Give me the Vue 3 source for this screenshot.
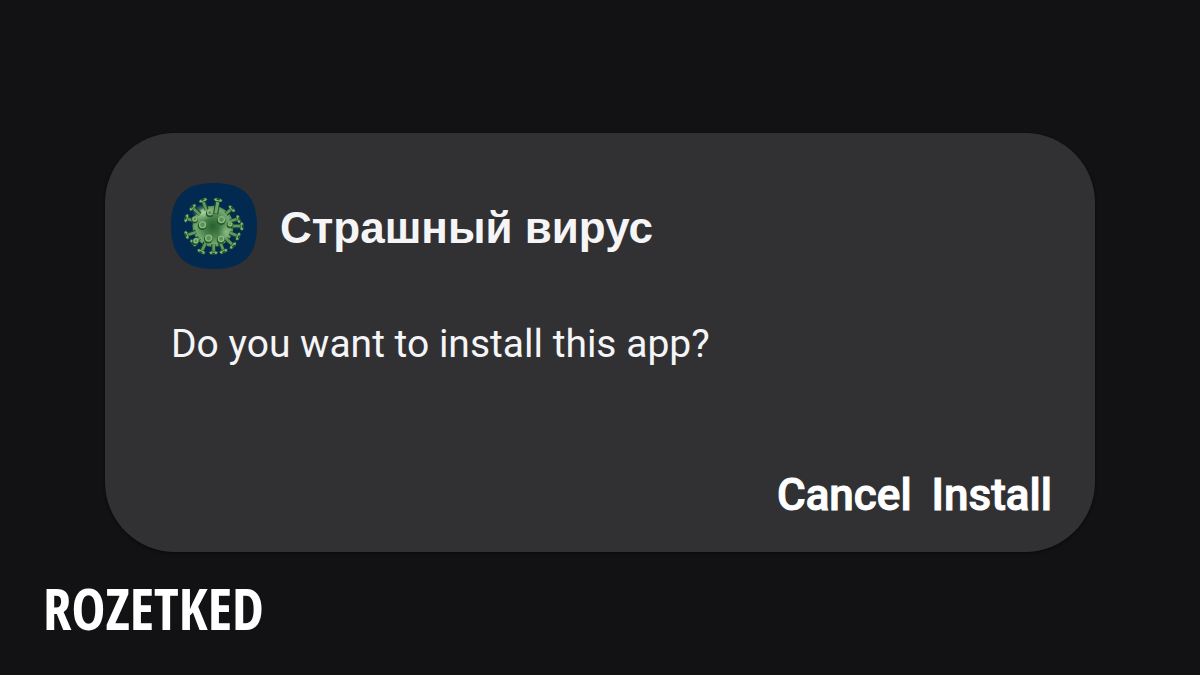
<script setup>
const appName = 'Страшный вирус'

// Outer spikes: angle in degrees around the body, and reach from its centre
const spikes = [
  { angle: -111, reach: 82 },
  { angle: -79, reach: 79 },
  { angle: -137, reach: 82 },
  { angle: -43, reach: 76 },
  { angle: -163, reach: 82 },
  { angle: -16, reach: 78 },
  { angle: 0, reach: 85 },
  { angle: 162, reach: 82 },
  { angle: 22, reach: 80 },
  { angle: 140, reach: 76 },
  { angle: 44, reach: 82 },
  { angle: 115, reach: 82 },
  { angle: 89, reach: 78 },
  { angle: 67, reach: 80 },
]

// Knobs on the side of the body that faces the viewer
const knobs = [
  { x: 152, y: 127, r: 9 },
  { x: 186, y: 148, r: 11 },
  { x: 130, y: 163, r: 11 },
  { x: 148, y: 203, r: 11 },
  { x: 185, y: 205, r: 10 },
  { x: 107, y: 146, r: 8 },
  { x: 212, y: 162, r: 7 },
  { x: 110, y: 211, r: 8 },
]
</script>

<template>
  <div class="page">
    <main class="dialog" role="dialog" aria-labelledby="dialog-title" aria-describedby="dialog-text">
      <header class="heading">
        <svg class="app-icon" viewBox="36 39 256 256" aria-hidden="true">
          <defs>
            <radialGradient id="body" cx="0.5" cy="0.5" r="0.52">
              <stop offset="0" stop-color="#28602c" />
              <stop offset="0.45" stop-color="#47804a" />
              <stop offset="0.82" stop-color="#75a873" />
              <stop offset="1" stop-color="#4c8550" />
            </radialGradient>
            <radialGradient id="shine" cx="0.5" cy="0.5" r="0.5">
              <stop offset="0" stop-color="#b7dca5" stop-opacity="0.85" />
              <stop offset="1" stop-color="#8fc080" stop-opacity="0" />
            </radialGradient>
          </defs>
          <path
            d="M164 39C246 39 292 73 292 167S246 295 164 295S36 261 36 167S82 39 164 39Z"
            fill="#022a50"
          />
          <circle cx="161" cy="168" r="61" fill="url(#body)" />
          <ellipse cx="132" cy="127" rx="34" ry="25" fill="url(#shine)" />
          <ellipse cx="199" cy="183" rx="22" ry="27" fill="url(#shine)" opacity="0.6" />
          <g
            v-for="s in spikes"
            :key="s.angle"
            :transform="`translate(161 168) rotate(${s.angle})`"
            fill="none"
          >
            <path :d="`M53 0H${s.reach}`" stroke="#1b472b" stroke-width="13" />
            <path :d="`M52 -1H${s.reach}`" stroke="#5d9a5c" stroke-width="8" />
            <path :d="`M${s.reach - 4} -9L${s.reach + 1} -7V7L${s.reach - 4} 9`" stroke="#27572f" stroke-width="11" stroke-linejoin="round" />
            <path :d="`M${s.reach - 2} -9L${s.reach + 1} -7V7L${s.reach - 2} 9`" stroke="#86b77c" stroke-width="7" stroke-linejoin="round" />
            <path :d="`M${s.reach + 3} -5V5`" stroke="#1f4c30" stroke-width="5" />
          </g>
          <path d="M169 132L174 99" stroke="#244f27" stroke-width="15" />
          <path d="M169 130L175 97" stroke="#6ea368" stroke-width="9" />
          <g v-for="k in knobs" :key="`${k.x}-${k.y}`">
            <circle :cx="k.x - 1" :cy="k.y + 3" :r="k.r + 2" fill="#24552b" />
            <circle :cx="k.x" :cy="k.y" :r="k.r" fill="#8abd80" />
            <circle :cx="k.x" :cy="k.y" :r="k.r - 4" fill="#5c9259" />
          </g>
        </svg>
        <h1 id="dialog-title" class="title">{{ appName }}</h1>
      </header>
      <p id="dialog-text" class="message">Do you want to install this app?</p>
      <div class="actions">
        <button type="button">Cancel</button>
        <button type="button">Install</button>
      </div>
    </main>
    <footer class="brand">ROZETKED</footer>
  </div>
</template>

<style>
body {
  margin: 0;
  background: #121214;
}
</style>

<style scoped>
.page {
  box-sizing: border-box;
  min-height: 100vh;
  padding: 133px 105px 0;
  background: #121214;
  color: #f5f5f7;
  font-family: Roboto, "Liberation Sans", sans-serif;
}

.dialog {
  padding: 50px 43px 29px 66px;
  border-radius: 70px;
  background: #313133;
  box-shadow: 0 1px 3px #09090a;
}

.heading {
  display: flex;
  align-items: center;
  gap: 23px;
}

.app-icon {
  flex: none;
  width: 86px;
  height: 86px;
}

.title {
  margin: 0;
  padding-top: 4px;
  font: bold 44px/52px "Liberation Sans", sans-serif;
}

.message {
  margin: 51px 0 0;
  font-size: 39px;
  line-height: 48px;
}

.actions {
  display: flex;
  justify-content: flex-end;
  gap: 20px;
  margin-top: 99px;
}

.actions button {
  padding: 0;
  border: 0;
  background: none;
  color: #fff;
  font: 500 44px/56px Roboto, "Liberation Sans", sans-serif;
  -webkit-text-stroke: 1px #fff;
  cursor: pointer;
}

.brand {
  margin: 26px 0 0 -62px;
  color: #fff;
  font: bold 57px/60px "Open Sans Condensed", "Liberation Sans Narrow", "Liberation Sans", sans-serif;
}
</style>
